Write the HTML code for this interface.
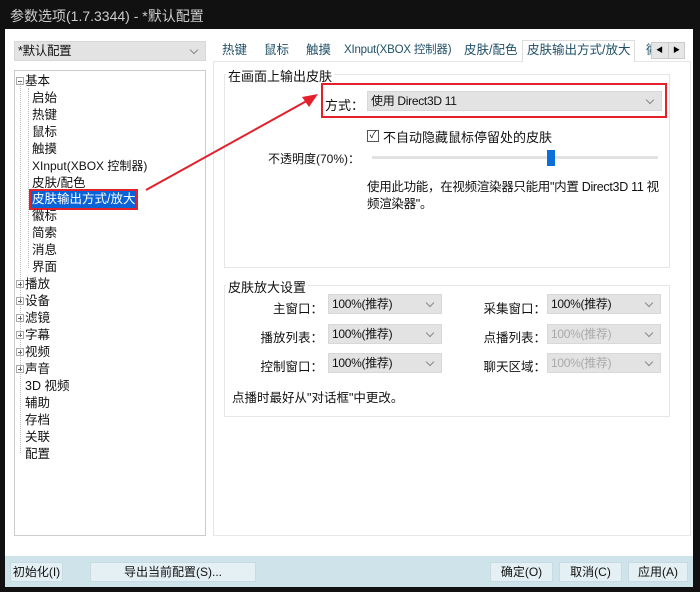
<!DOCTYPE html>
<html><head><meta charset="utf-8"><style>
*{margin:0;padding:0;box-sizing:border-box}
body{width:700px;height:592px;background:#111;position:relative;overflow:hidden;font-family:"Liberation Sans","Noto Sans CJK SC",sans-serif;font-size:13px;color:#111}
.a{position:absolute}
.win{left:5px;top:29px;width:688px;height:558px;background:#fff}
.title{left:10px;top:6px;color:#ccc;font-size:14px}
.combo{background:#e3e3e3;border:1px solid #d8d8d8;height:20px;font-size:12px;padding-left:3px;line-height:18px;letter-spacing:-0.3px}
.combo:after{content:"";position:absolute;right:8px;top:5px;width:5px;height:5px;border-right:1px solid #888;border-bottom:1px solid #888;transform:rotate(45deg)}
.dis{color:#aaa}
.tree{left:14px;top:70px;width:192px;height:466px;border:1px solid #ccc;background:#fff}
.ti{position:absolute;left:0;height:17px;line-height:17px;white-space:nowrap;font-size:12.5px}
.pm{display:inline-block;width:8px;height:8px;border:1px solid #aaa;margin-right:1px;vertical-align:-0px;position:relative}
.pm:before{content:"";position:absolute;left:1px;top:3px;width:4px;height:1px;background:#666}
.pp:after{content:"";position:absolute;left:3px;top:1px;width:1px;height:4px;background:#666}
.tab{top:41px;height:20px;line-height:18px;color:#1e4f66;font-size:12.5px;white-space:nowrap}
.box{border:1px solid #e6e6e6}
.btn{top:562px;height:20px;background:#e4f0f4;border:1px solid #c6dbe2;text-align:center;line-height:18px;font-size:12px}
.lbl{font-size:12.5px;text-align:right;width:80px}
</style></head><body>
<div class="a title">参数选项(1.7.3344) - *默认配置</div>
<div class="a win"></div>
<div class="a combo" style="left:14px;top:41px;width:192px;font-size:12.5px">*默认配置</div>
<div class="a tree">
<div class="a" style="left:5px;top:12px;width:1px;height:370px;border-left:1px dotted #bbb"></div>
<div class="a" style="left:13px;top:17px;width:1px;height:180px;border-left:1px dotted #bbb"></div>
<div class="ti" style="top:2px;left:1px"><span class="pm"></span>基本</div>
<div class="ti" style="top:19px;left:17px">启始</div>
<div class="ti" style="top:36px;left:17px">热键</div>
<div class="ti" style="top:53px;left:17px">鼠标</div>
<div class="ti" style="top:70px;left:17px">触摸</div>
<div class="ti" style="top:87px;left:17px;font-size:12px">XInput(XBOX 控制器)</div>
<div class="ti" style="top:104px;left:17px">皮肤/配色</div>
<div class="ti" style="top:120px;left:16px;background:#0a63d6;color:#fff;outline:2px solid #e4202a;padding:0 1px">皮肤输出方式/放大</div>
<div class="ti" style="top:137px;left:17px">徽标</div>
<div class="ti" style="top:154px;left:17px">简索</div>
<div class="ti" style="top:171px;left:17px">消息</div>
<div class="ti" style="top:188px;left:17px">界面</div>
<div class="ti" style="top:205px;left:1px"><span class="pm pp"></span>播放</div>
<div class="ti" style="top:222px;left:1px"><span class="pm pp"></span>设备</div>
<div class="ti" style="top:239px;left:1px"><span class="pm pp"></span>滤镜</div>
<div class="ti" style="top:256px;left:1px"><span class="pm pp"></span>字幕</div>
<div class="ti" style="top:273px;left:1px"><span class="pm pp"></span>视频</div>
<div class="ti" style="top:290px;left:1px"><span class="pm pp"></span>声音</div>
<div class="ti" style="top:307px;left:10px">3D 视频</div>
<div class="ti" style="top:324px;left:10px">辅助</div>
<div class="ti" style="top:341px;left:10px">存档</div>
<div class="ti" style="top:358px;left:10px">关联</div>
<div class="ti" style="top:375px;left:10px">配置</div>
</div>
<div class="a tab" style="left:222px">热键</div>
<div class="a tab" style="left:264px">鼠标</div>
<div class="a tab" style="left:306px">触摸</div>
<div class="a tab" style="left:344px;font-size:11.5px;letter-spacing:-0.2px">XInput(XBOX 控制器)</div>
<div class="a tab" style="left:464px">皮肤/配色</div>
<div class="a tab" style="left:522px;top:40px;height:22px;border:1px solid #ddd;border-bottom:none;background:#fff;padding:0 4px;z-index:2">皮肤输出方式/放大</div>
<div class="a tab" style="left:646px">徽</div>
<div class="a" style="left:651px;top:42px;width:34px;height:17px;background:#e6e6e6;border:1px solid #ccc;font-size:7px;line-height:15px;color:#000"><span style="position:absolute;left:4px">◀</span><span style="position:absolute;left:21px">▶</span><span style="position:absolute;left:16px;top:0;width:1px;height:15px;background:#ccc"></span></div>
<div class="a box" style="left:213px;top:61px;width:478px;height:475px"></div>
<div class="a box" style="left:224px;top:74px;width:446px;height:194px"></div>
<div class="a" style="left:226px;top:66px;background:#fff;padding:0 2px">在画面上输出皮肤</div>
<div class="a" style="left:321px;top:83px;width:346px;height:35px;border:2px solid #e4202a"></div>
<div class="a" style="left:325px;top:95px">方式：</div>
<div class="a combo" style="left:367px;top:91px;width:295px">使用 Direct3D 11</div>
<div class="a" style="left:367px;top:130px;width:12px;height:12px;border:1px solid #555;font-size:10px;line-height:10px;text-align:center">✓</div>
<div class="a" style="left:383px;top:127px">不自动隐藏鼠标停留处的皮肤</div>
<div class="a" style="left:268px;top:150px;font-size:12px">不透明度(70%)：</div>
<div class="a" style="left:372px;top:156px;width:286px;height:3px;background:#e2e2e2"></div>
<div class="a" style="left:547px;top:150px;width:8px;height:16px;background:#0a6fd8"></div>
<div class="a" style="left:367px;top:179px;line-height:17px;font-size:12.5px;width:300px;letter-spacing:-0.3px">使用此功能，在视频渲染器只能用"内置 Direct3D 11 视<br>频渲染器"。</div>
<div class="a box" style="left:224px;top:285px;width:446px;height:132px"></div>
<div class="a" style="left:226px;top:277px;background:#fff;padding:0 2px">皮肤放大设置</div>
<div class="a lbl" style="left:243px;top:298px">主窗口：</div>
<div class="a lbl" style="left:243px;top:327px">播放列表：</div>
<div class="a lbl" style="left:243px;top:356px">控制窗口：</div>
<div class="a lbl" style="left:466px;top:298px">采集窗口：</div>
<div class="a lbl" style="left:466px;top:327px">点播列表：</div>
<div class="a lbl" style="left:466px;top:356px">聊天区域：</div>
<div class="a combo" style="left:328px;top:294px;width:114px">100%(推荐)</div>
<div class="a combo" style="left:328px;top:324px;width:114px">100%(推荐)</div>
<div class="a combo" style="left:328px;top:353px;width:114px">100%(推荐)</div>
<div class="a combo" style="left:547px;top:294px;width:114px">100%(推荐)</div>
<div class="a combo dis" style="left:547px;top:324px;width:114px">100%(推荐)</div>
<div class="a combo dis" style="left:547px;top:353px;width:114px">100%(推荐)</div>
<div class="a" style="left:232px;top:387px;font-size:12.5px">点播时最好从"对话框"中更改。</div>
<div class="a" style="left:5px;top:556px;width:688px;height:31px;background:#cfe3ea"></div>
<div class="a btn" style="left:10px;width:53px">初始化(I)</div>
<div class="a btn" style="left:90px;width:166px">导出当前配置(S)...</div>
<div class="a btn" style="left:490px;width:63px">确定(O)</div>
<div class="a btn" style="left:559px;width:63px">取消(C)</div>
<div class="a btn" style="left:628px;width:60px">应用(A)</div>
<svg class="a" style="left:0;top:0" width="700" height="592"><line x1="146" y1="190" x2="312" y2="98" stroke="#e4202a" stroke-width="2"/><polygon points="318,94 302,97 309,107" fill="#e4202a"/></svg>
</body></html>
